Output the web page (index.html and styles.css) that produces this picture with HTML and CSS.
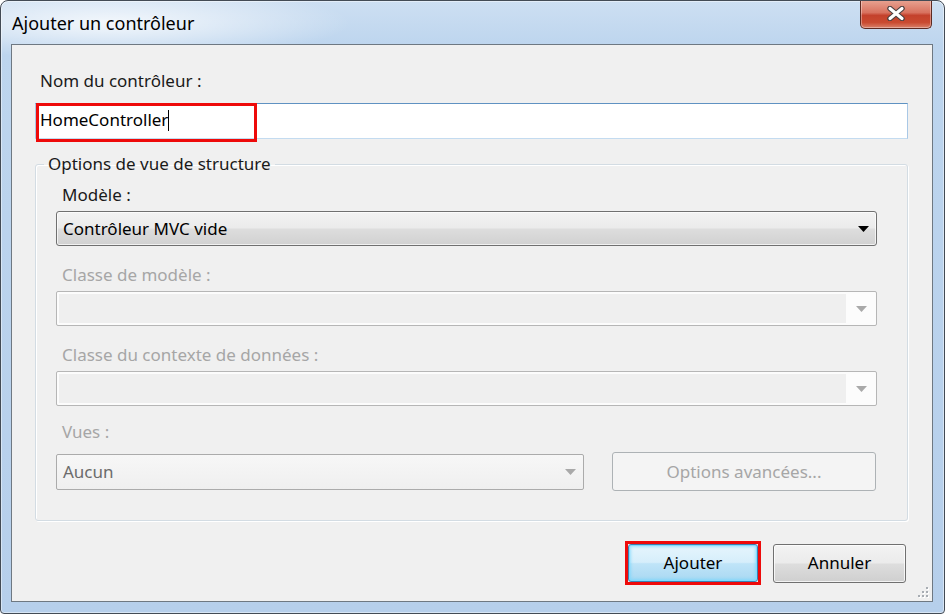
FILE: index.html
```html
<!DOCTYPE html>
<html lang="fr">
<head>
<meta charset="utf-8">
<title>Ajouter un contrôleur</title>
<link rel="stylesheet" href="styles.css">
</head>
<body>
<div class="window">
  <div class="titlebar">
    <div class="title">Ajouter un contrôleur</div>
    <div class="close">
      <svg width="20" height="15" viewBox="0 0 20 15">
        <path d="M4 2.5 L16 12.5 M16 2.5 L4 12.5" stroke="#4a4040" stroke-width="5.5" stroke-linecap="round" fill="none"/>
        <path d="M4 2.5 L16 12.5 M16 2.5 L4 12.5" stroke="#ffffff" stroke-width="3.2" stroke-linecap="round" fill="none"/>
      </svg>
    </div>
  </div>
  <div class="client">
    <div class="field-label">Nom du contrôleur :</div>
    <div class="textbox">
      <span class="tb-text">HomeController</span><span class="caret"></span>
      <div class="mark mark-input"></div>
    </div>
    <fieldset class="group">
      <legend>Options de vue de structure</legend>
      <div class="group-body">
        <div class="row">
          <div class="lbl">Modèle :</div>
          <div class="combo combo-active">
            <span class="combo-text">Contrôleur MVC vide</span>
            <svg class="arrow" width="11" height="6" viewBox="0 0 11 6"><path d="M0 0 H11 L5.5 6 Z" fill="#000"/></svg>
          </div>
        </div>
        <div class="row">
          <div class="lbl lbl-disabled">Classe de modèle :</div>
          <div class="combo combo-disabled">
            <div class="combo-field"></div>
            <div class="combo-btn"><svg width="11" height="6" viewBox="0 0 11 6"><path d="M0 0 H11 L5.5 6 Z" fill="#a9a9a9"/></svg></div>
          </div>
        </div>
        <div class="row">
          <div class="lbl lbl-disabled">Classe du contexte de données :</div>
          <div class="combo combo-disabled">
            <div class="combo-field"></div>
            <div class="combo-btn"><svg width="11" height="6" viewBox="0 0 11 6"><path d="M0 0 H11 L5.5 6 Z" fill="#a9a9a9"/></svg></div>
          </div>
        </div>
        <div class="row row-last">
          <div class="lbl lbl-disabled">Vues :</div>
          <div class="views-line">
            <div class="combo combo-list">
              <span class="combo-text list-text">Aucun</span>
              <svg class="arrow" width="11" height="6" viewBox="0 0 11 6"><path d="M0 0 H11 L5.5 6 Z" fill="#a9a9a9"/></svg>
            </div>
            <div class="btn btn-disabled">Options avancées...</div>
          </div>
        </div>
      </div>
    </fieldset>
    <div class="buttons">
      <div class="mark-btn"><div class="btn btn-default">Ajouter</div></div>
      <div class="btn btn-normal">Annuler</div>
    </div>
    <svg class="grip" width="13" height="13" viewBox="0 0 13 13">
      <g fill="#ffffff">
        <rect x="11" y="3" width="2" height="2"/><rect x="11" y="7" width="2" height="2"/><rect x="11" y="11" width="2" height="2"/>
        <rect x="7" y="7" width="2" height="2"/><rect x="7" y="11" width="2" height="2"/><rect x="3" y="11" width="2" height="2"/>
      </g>
      <g fill="#a8adb3">
        <rect x="10" y="2" width="2" height="2"/><rect x="10" y="6" width="2" height="2"/><rect x="10" y="10" width="2" height="2"/>
        <rect x="6" y="6" width="2" height="2"/><rect x="6" y="10" width="2" height="2"/><rect x="2" y="10" width="2" height="2"/>
      </g>
    </svg>
  </div>
</div>
</body>
</html>
```
FILE: styles.css
```css
* { box-sizing: border-box; }
html, body { margin: 0; padding: 0; background: #ffffff; }
body {
  font-family: "Noto Sans", "Open Sans", "DejaVu Sans", sans-serif;
  font-size: 17px;
  color: #000;
}

.window {
  width: 945px;
  height: 614px;
  border: 1px solid #434b55;
  border-radius: 8px 8px 4px 4px;
  padding: 0 11px 11px 10px;
  display: flex;
  flex-direction: column;
  position: relative;
  overflow: hidden;
  background:
    radial-gradient(ellipse 240px 36px at 110px 22px, rgba(255,255,255,0.8), rgba(255,255,255,0) 100%),
    linear-gradient(to bottom, #cddff2 0px, #bdd5ee 45px, #b6cfeb 100%);
  box-shadow: inset 0 0 0 1px rgba(255,255,255,0.45);
}

.titlebar {
  height: 43px;
  display: flex;
  justify-content: space-between;
  align-items: flex-start;
  padding: 0 1px;
  flex: none;
}
.title {
  margin-top: 10px;
  font-size: 18px;
  line-height: 24px;
  color: #000;
}
.close {
  width: 72px;
  height: 29px;
  margin-top: -1px;
  border: 1px solid #5d2a22;
  border-top: none;
  border-radius: 0 0 5px 5px;
  background: linear-gradient(to bottom, #e8a493 0%, #d8725f 45%, #c4412c 55%, #c94a30 80%, #d9816a 100%);
  box-shadow: inset 0 0 0 1px rgba(255,255,255,0.35);
  display: flex;
  align-items: center;
  justify-content: center;
}
.close svg { margin-top: -1px; }

.client {
  flex: 1;
  border: 1px solid #6e7882;
  background: #f0f0f0;
  display: flex;
  flex-direction: column;
  position: relative;
}

.field-label {
  margin: 25px 0 0 28px;
  line-height: 22px;
  color: #1a1a1a;
}

.textbox {
  margin: 11px 0 0 23px;
  width: 873px;
  height: 36px;
  background: #fff;
  border: 1px solid #a9c8e6;
  border-top-color: #5f92c2;
  border-bottom-color: #c3dbf0;
  display: flex;
  align-items: center;
  padding-left: 4px;
  padding-bottom: 2px;
  position: relative;
}
.tb-text { line-height: 22px; color: #000; }
.caret {
  display: inline-block;
  width: 1px;
  height: 21px;
  background: #000;
}
.mark {
  position: absolute;
  border: 3px solid #ee0a0a;
}
.mark-input {
  left: 0px;
  top: -1px;
  width: 221px;
  height: 39px;
}

.group {
  margin: 14px 0 0 23px;
  width: 873px;
  padding: 9px 30px 29px 8px;
  border: 1px solid #d3dce3;
  border-radius: 3px;
  box-shadow: inset 1px 1px 0 #ffffff, 1px 1px 0 #ffffff;
  min-width: 0;
}
.group legend {
  padding: 0 4px;
  line-height: 22px;
  color: #1a1a1a;
}
.group-body {
  padding-left: 12px;
  display: flex;
  flex-direction: column;
  gap: 18px;
}
.row { display: flex; flex-direction: column; gap: 5px; }
.lbl {
  line-height: 22px;
  padding-left: 6px;
  color: #1a1a1a;
}
.lbl-disabled { color: #a6a6a6; }

.combo {
  height: 35px;
  display: flex;
  align-items: center;
}
.combo-active {
  border: 1px solid #707070;
  border-radius: 3px;
  background: linear-gradient(to bottom, #f3f3f3 0%, #ebebeb 48%, #dddddd 52%, #d1d1d1 100%);
  box-shadow: inset 0 0 0 1px rgba(255,255,255,0.7);
  padding: 0 7px 0 6px;
  justify-content: space-between;
}
.combo-text { line-height: 22px; color: #000; }
.combo-disabled {
  border: 1px solid #b6b6b6;
  border-radius: 2px;
  background: #fcfcfc;
  padding: 2px;
  align-items: stretch;
}
.combo-field { flex: 1; background: #efefef; }
.combo-btn {
  width: 28px;
  display: flex;
  align-items: center;
  justify-content: center;
  padding-left: 2px;
}

.row-last { gap: 0; margin-top: -3px; }
.views-line {
  margin-top: 9px;
  display: flex;
  align-items: center;
  gap: 28px;
}
.combo-list {
  width: 528px;
  height: 36px;
  border: 1px solid #ababab;
  border-radius: 2px;
  background: linear-gradient(to bottom, #f7f7f7, #efefef);
  padding: 0 7px 0 6px;
  justify-content: space-between;
}
.list-text { color: #6b6b6b; }

.btn {
  display: flex;
  align-items: center;
  justify-content: center;
  line-height: 22px;
  border-radius: 3px;
}
.btn-disabled {
  width: 264px;
  height: 39px;
  border: 1px solid #adb2b5;
  background: #f4f4f4;
  color: #a6a6a6;
}

.buttons {
  margin-top: 20px;
  padding-right: 26px;
  display: flex;
  justify-content: flex-end;
  align-items: center;
  gap: 12px;
}
.mark-btn {
  border: 3px solid #ee0a0a;
  width: 136px;
  height: 44px;
}
.btn-default {
  width: 130px;
  height: 38px;
  border: 1px solid #3c7fb1;
  background: linear-gradient(to bottom, #e6f5fd 0%, #d6eefb 48%, #bfe4f8 52%, #a9d8f2 100%);
  box-shadow: inset 0 0 0 1px #7fdcff, inset 0 0 3px 2px rgba(110, 215, 255, 0.6);
  color: #000;
}
.btn-normal {
  width: 133px;
  height: 39px;
  border: 1px solid #707070;
  background: linear-gradient(to bottom, #f3f3f3 0%, #ebebeb 48%, #dddddd 52%, #cfcfcf 100%);
  box-shadow: inset 0 0 0 1px rgba(255,255,255,0.75);
  color: #000;
}

.grip {
  position: absolute;
  right: 3px;
  bottom: 3px;
}
```
